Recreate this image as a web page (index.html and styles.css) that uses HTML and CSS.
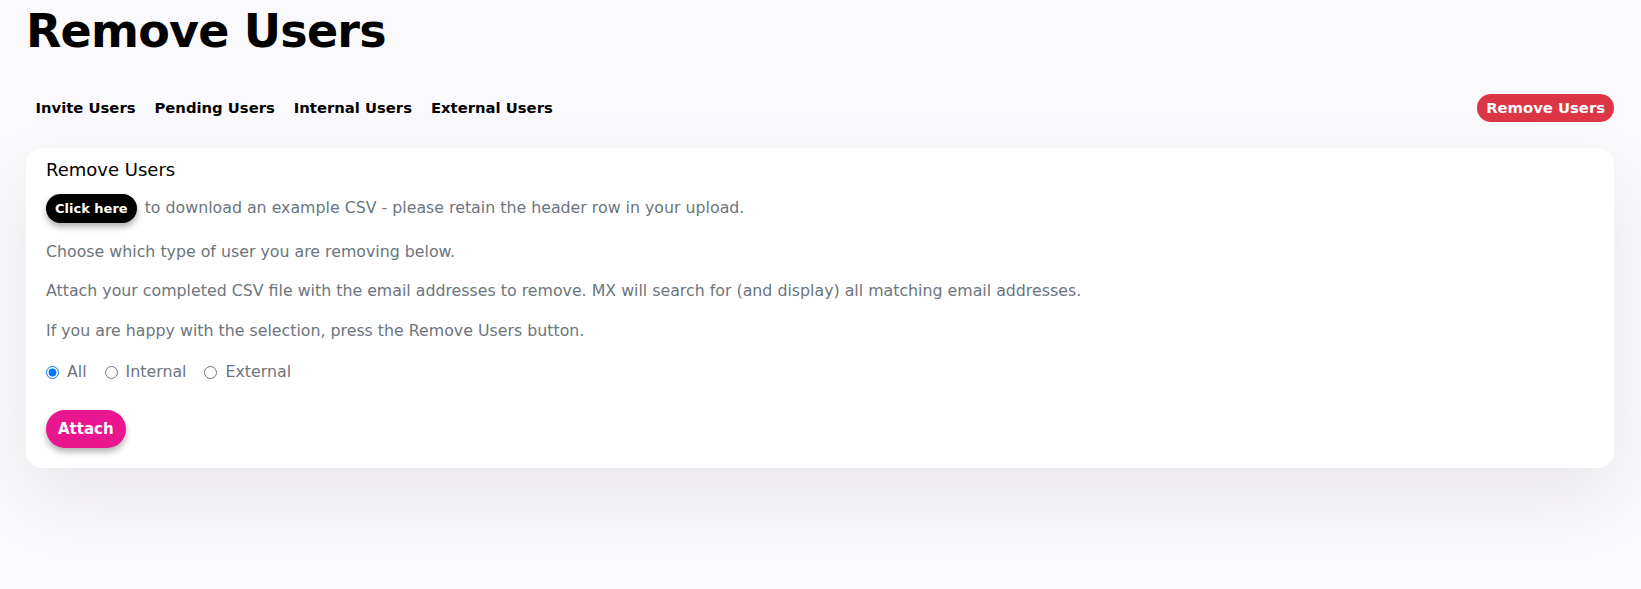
FILE: index.html
```html
<!DOCTYPE html>
<html lang="en">
<head>
<meta charset="utf-8">
<title>Remove Users</title>
<link rel="stylesheet" href="styles.css">
</head>
<body>
<div class="page">
  <h1 class="title">Remove Users</h1>
  <nav class="tabs">
    <div class="tab-list">
      <a class="tab">Invite Users</a>
      <a class="tab">Pending Users</a>
      <a class="tab">Internal Users</a>
      <a class="tab">External Users</a>
    </div>
    <a class="tab tab-active">Remove Users</a>
  </nav>
  <section class="card">
    <h2 class="card-title">Remove Users</h2>
    <p class="line first"><button class="btn btn-dark">Click here</button> to download an example CSV - please retain the header row in your upload.</p>
    <p class="line">Choose which type of user you are removing below.</p>
    <p class="line">Attach your completed CSV file with the email addresses to remove. MX will search for (and display) all matching email addresses.</p>
    <p class="line">If you are happy with the selection, press the Remove Users button.</p>
    <div class="radios">
      <label class="radio"><input type="radio" name="type" checked> All</label>
      <label class="radio"><input type="radio" name="type"> Internal</label>
      <label class="radio"><input type="radio" name="type"> External</label>
    </div>
    <button class="btn btn-pink">Attach</button>
  </section>
</div>
</body>
</html>
```
FILE: styles.css
```css
* { box-sizing: border-box; }
html, body { margin: 0; height: 100%; }
body {
  font-family: "DejaVu Sans", "Open Sans", sans-serif;
  background: #faf9fb;
  color: #000;
}
.page {
  padding: 0 27px 0 26px;
}
.title {
  margin: 0;
  padding-top: 4px;
  font-size: 46px;
  font-weight: 700;
  line-height: 54px;
  letter-spacing: -0.8px;
}
.tabs {
  display: flex;
  justify-content: space-between;
  align-items: center;
  margin-top: 36px;
  height: 28px;
}
.tab-list { display: flex; }
.tab {
  font-size: 14.8px;
  font-weight: 700;
  padding: 0 9.5px;
  line-height: 28px;
  color: #000;
}
.tab-active {
  background: #dc3545;
  color: #fff;
  border-radius: 14px;
  padding: 0 9px;
}
.card {
  margin-top: 26px;
  background: #fff;
  border-radius: 16px;
  padding: 9.5px 20px 20px;
  box-shadow: 0 30px 80px rgba(60, 40, 80, 0.09);
}
.card-title {
  margin: 0 0 12px;
  font-size: 18px;
  font-weight: 500;
  line-height: 24px;
}
.line {
  margin: 0 0 19.5px;
  font-size: 15.8px;
  line-height: 20px;
  color: #6c757d;
}
.line.first {
  display: flex;
  align-items: center;
  gap: 8px;
  margin-bottom: 19px;
}
.btn {
  border: 0;
  font-family: inherit;
  font-weight: 700;
  color: #fff;
  cursor: pointer;
}
.btn-dark {
  background: #000;
  border-radius: 15px;
  height: 29px;
  padding: 0 9px;
  font-size: 13px;
  box-shadow: 0 4px 6px rgba(0, 0, 0, 0.3);
}
.btn-pink {
  display: block;
  background: #e9168f;
  border-radius: 19px;
  height: 38px;
  padding: 0 12px;
  font-size: 15px;
  box-shadow: 0 4px 6px rgba(0, 0, 0, 0.3);
}
.radios {
  display: flex;
  gap: 18px;
  padding-top: 2px;
  margin: 0 0 27.5px;
  font-size: 15.8px;
  line-height: 20px;
  color: #6c757d;
}
.radio {
  display: flex;
  align-items: center;
  gap: 7px;
}
.radio input { margin: 0 1px 0 0; width: 13px; height: 13px; }
```
